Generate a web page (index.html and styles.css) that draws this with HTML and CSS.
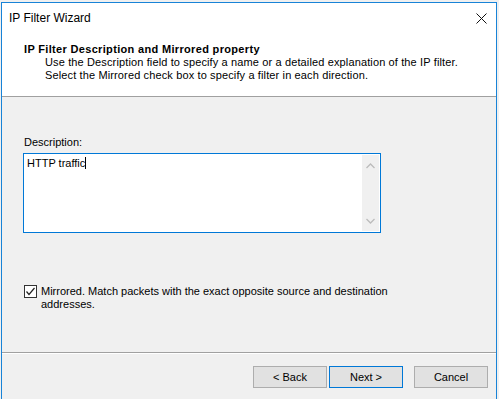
FILE: index.html
```html
<!DOCTYPE html>
<html lang="en">
<head>
    <meta charset="UTF-8">
    <title>IP Filter Wizard</title>
    <link rel="stylesheet" href="styles.css">
</head>
<body>
    <div class="window">
        <div class="titlebar">
            <span class="title">IP Filter Wizard</span>
            <span class="close">
                <svg width="11" height="11" viewBox="0 0 11 11">
                    <path d="M0.5 0.5L10.5 10.5M10.5 0.5L0.5 10.5" stroke="#111" stroke-width="1"/>
                </svg>
            </span>
        </div>
        <div class="header">
            <div class="heading">IP Filter Description and Mirrored property</div>
            <div class="info">Use the Description field to specify a name or a detailed explanation of the IP filter.</div>
            <div class="info">Select the Mirrored check box to specify a filter in each direction.</div>
        </div>
        <div class="content">
            <div class="label">Description:</div>
            <div class="textbox">
                <div class="text">HTTP traffic<span class="caret"></span></div>
                <div class="scroll">
                    <svg width="9" height="6" viewBox="0 0 9 6">
                        <path d="M0.5 5L4.5 1L8.5 5" fill="none" stroke="#bcbcbc" stroke-width="1.3"/>
                    </svg>
                    <svg width="9" height="6" viewBox="0 0 9 6">
                        <path d="M0.5 1L4.5 5L8.5 1" fill="none" stroke="#bcbcbc" stroke-width="1.3"/>
                    </svg>
                </div>
            </div>
            <div class="check">
                <span class="box">
                    <svg width="11" height="11" viewBox="0 0 11 11">
                        <path d="M1.5 5.5L4 8.5L9.5 2" fill="none" stroke="#222" stroke-width="1.2"/>
                    </svg>
                </span>
                <span class="check-text">Mirrored. Match packets with the exact opposite source and destination<br>addresses.</span>
            </div>
        </div>
        <div class="footer">
            <button class="btn">&lt; Back</button>
            <button class="btn default">Next &gt;</button>
            <button class="btn cancel">Cancel</button>
        </div>
    </div>
</body>
</html>
```

FILE: styles.css
```css
body{
    margin: 0;
    background: #f0f0f0;
    font-family: "Liberation Sans", Arial, sans-serif;
    font-size: 11px;
    color: #000;
    overflow: hidden;
}
.window{
    margin: 2px 0 0 1px;
    width: 494px;
    height: 397px;
    border: 1px solid #1883d7;
    border-bottom: none;
    background: #f0f0f0;
    overflow: hidden;
}
.titlebar{
    height: 30px;
    background: #fff;
    display: flex;
    align-items: center;
    justify-content: space-between;
    padding: 0 9px 0 7px;
}
.title{
    font-size: 12px;
}
.close{
    display: flex;
    margin-top: 1px;
}
.header{
    background: #fff;
    padding: 10px 0 14px 22px;
    border-bottom: 1px solid #a0a0a0;
    line-height: 13px;
}
.heading{
    font-weight: bold;
    letter-spacing: 0.33px;
}
.info{
    padding-left: 21px;
    letter-spacing: 0.13px;
}
.content{
    padding: 39px 0 0 21px;
    line-height: 13px;
}
.label{
    padding-left: 1px;
}
.textbox{
    margin-top: 4px;
    width: 356px;
    height: 78px;
    border: 1px solid #0078d7;
    background: #fff;
    display: flex;
    justify-content: space-between;
}
.text{
    padding: 3px 0 0 3px;
}
.caret{
    display: inline-block;
    width: 1px;
    height: 12px;
    background: #000;
    vertical-align: -2px;
}
.scroll{
    width: 17px;
    margin: 1px 1px 1px 0;
    background: #f0f0f0;
    display: flex;
    flex-direction: column;
    justify-content: space-between;
    align-items: center;
    padding: 8px 0 7px;
    box-sizing: border-box;
}
.check{
    margin-top: 52px;
    display: flex;
    align-items: flex-start;
}
.box{
    width: 11px;
    height: 11px;
    border: 1px solid #333;
    background: #fff;
    display: flex;
    margin: 0 4px 0 1px;
}
.footer{
    margin-top: 41px;
    border-top: 1px solid #a0a0a0;
    box-shadow: inset 0 1px 0 #fff;
    padding: 13px 8px 0 0;
    display: flex;
    justify-content: flex-end;
}
.btn{
    width: 74px;
    height: 22px;
    margin: 0 0 0 2px;
    padding: 0;
    border: 1px solid #adadad;
    background: #e1e1e1;
    font-family: "Liberation Sans", Arial, sans-serif;
    font-size: 11px;
    color: #000;
}
.default{
    border-color: #0078d7;
}
.cancel{
    margin-left: 11px;
}
```
